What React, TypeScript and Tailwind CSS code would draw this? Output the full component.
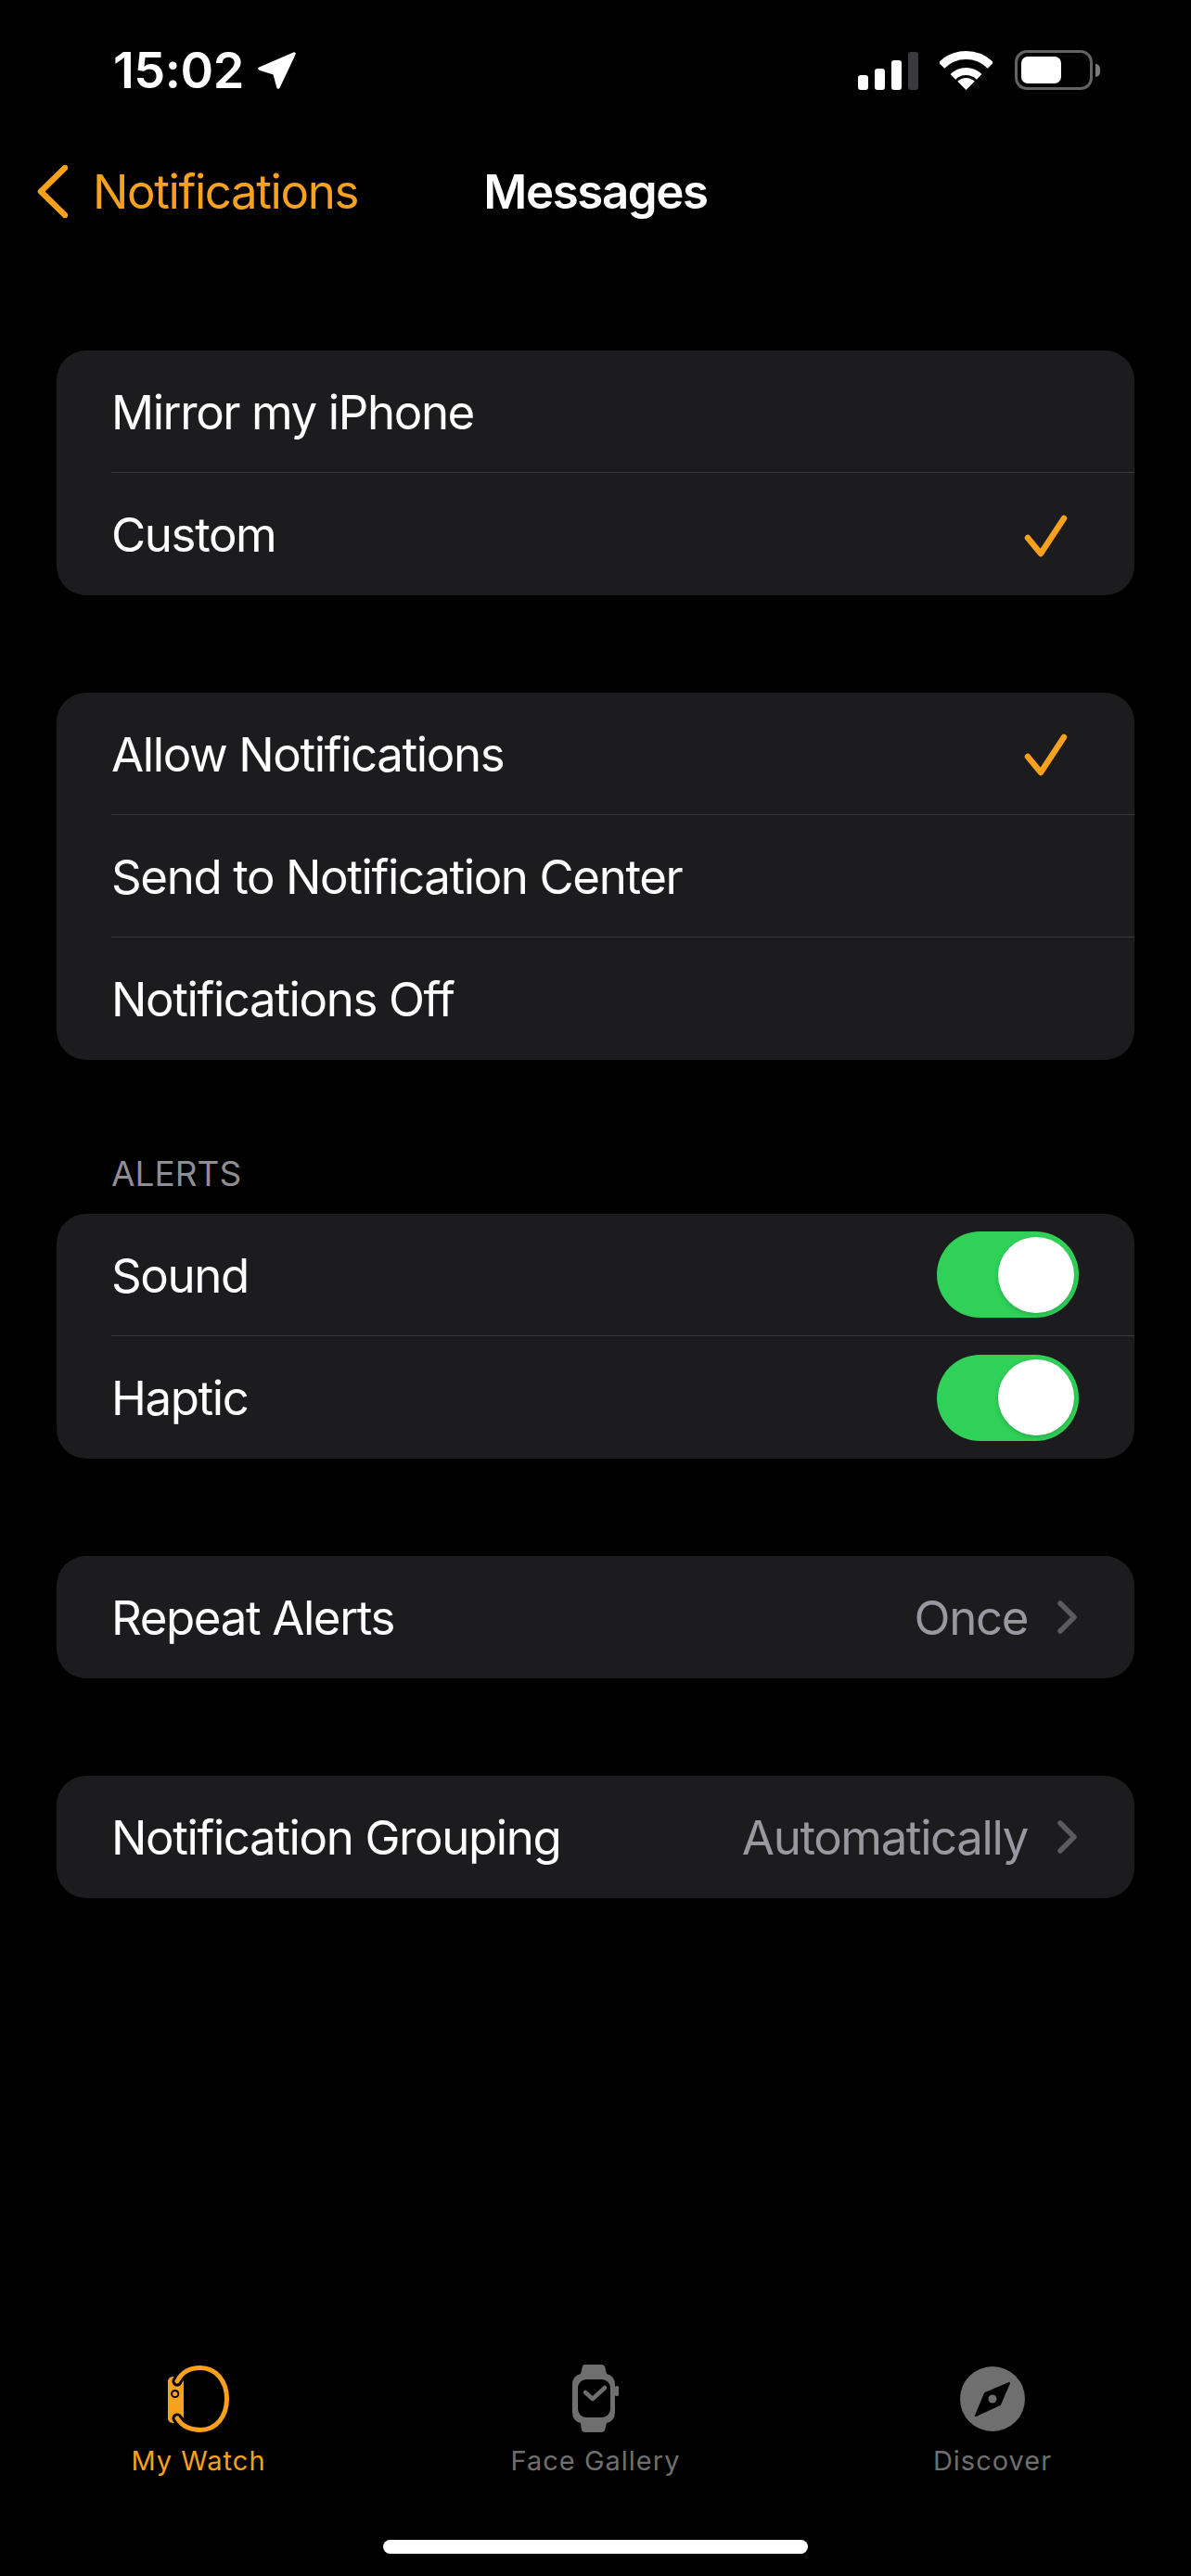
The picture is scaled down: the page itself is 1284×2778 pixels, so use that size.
import React from 'react'

const ORANGE = '#f7a11f'

function Check() {
  return (
    <svg width="48" height="46" viewBox="0 0 48 46" fill="none" stroke={ORANGE} strokeWidth="6.5" strokeLinecap="round" strokeLinejoin="round">
      <path d="M5 25 L19 42 L44 4" />
    </svg>
  )
}

function Chevron() {
  return (
    <svg width="22" height="36" viewBox="0 0 22 36" fill="none" stroke="#5c5c60" strokeWidth="5.5" strokeLinecap="round" strokeLinejoin="round">
      <path d="M3 3 L18 18 L3 33" />
    </svg>
  )
}

function Toggle() {
  return (
    <div className="w-[153px] h-[93px] rounded-full bg-[#30d158] flex items-center justify-end pr-[5px]">
      <div className="w-[82px] h-[82px] rounded-full bg-white shadow-[0_2px_5px_rgba(0,0,0,0.18)]" />
    </div>
  )
}

function Row({ label, last, children }: { label: string; last?: boolean; children?: React.ReactNode }) {
  return (
    <div className="pl-[59px]">
      <div className={`h-[132px] flex items-center justify-between text-white ${last ? '' : 'border-b border-[#38383a]'}`}>
        <span className="pt-[3px]">{label}</span>
        {children}
      </div>
    </div>
  )
}

function Card({ children }: { children: React.ReactNode }) {
  return <div className="bg-[#1c1c1e] rounded-[32px] overflow-hidden">{children}</div>
}

function Value({ text }: { text: string }) {
  return (
    <div className="flex items-center gap-[32px] pr-[61px]">
      <span className="pt-[3px] text-[#98989f]">{text}</span>
      <Chevron />
    </div>
  )
}

function StatusBar() {
  return (
    <div className="h-[152px] pt-[54px] pl-[122px] pr-[98px] flex items-start justify-between text-white">
      <div className="flex items-center gap-[15px] h-[43px]">
        <span className="text-[54px] font-semibold leading-none tracking-[-0.5px]">15:02</span>
        <svg width="41" height="40" viewBox="0 0 41 40" fill="white" stroke="white" strokeWidth="3.5" strokeLinejoin="round">
          <path d="M39 2 L2 18 L18 23 L22 38 Z" />
        </svg>
      </div>
      <div className="flex items-center">
        <div className="flex items-end gap-[7px] h-[42px]">
          <div className="w-[11px] h-[16px] rounded-[3px] bg-white" />
          <div className="w-[11px] h-[23px] rounded-[3px] bg-white" />
          <div className="w-[11px] h-[32px] rounded-[3px] bg-white" />
          <div className="w-[11px] h-[41px] rounded-[3px] bg-[#3a3a3c]" />
        </div>
        <svg className="ml-[23px]" width="57" height="42" viewBox="0 0 57 42" fill="none" stroke="white">
          <path d="M2 15.5 A37.5 37.5 0 0 1 55 15.5" strokeWidth="9" />
          <path d="M14.4 27.9 A20 20 0 0 1 42.6 27.9" strokeWidth="8" />
          <path d="M28.5 42 L19.3 32.8 A13 13 0 0 1 37.7 32.8 Z" fill="white" stroke="none" />
        </svg>
        <div className="ml-[24px] flex items-center gap-[3px]">
          <div className="w-[84px] h-[43px] rounded-[13px] border-[3px] border-[#636366] p-[4px] pr-[31px]">
            <div className="w-full h-full rounded-[7px] bg-white" />
          </div>
          <div className="w-[5px] h-[14px] rounded-r-full bg-[#7c7c80]" />
        </div>
      </div>
    </div>
  )
}

function NavBar() {
  return (
    <div className="h-[108px] px-[40px] flex items-center">
      <div className="flex-1 flex items-center gap-[27px]" style={{ color: ORANGE }}>
        <svg width="33" height="57" viewBox="0 0 33 57" fill="none" stroke={ORANGE} strokeWidth="6.5" strokeLinecap="round" strokeLinejoin="round">
          <path d="M30 3 L4 28.5 L30 54" />
        </svg>
        <span className="pt-[3px]">Notifications</span>
      </div>
      <span className="pt-[3px] text-white font-semibold">Messages</span>
      <div className="flex-1" />
    </div>
  )
}

function WatchIcon() {
  return (
    <svg width="66" height="72" viewBox="0 0 66 72" fill="none">
      <path d="M0 17 Q0 13 5 12 L17 12 L17 62 L5 62 Q0 61 0 57 Z" fill={ORANGE} />
      <path d="M10 17 C15 7 24 2.5 35 2.5 C52 2.5 63.5 17 63.5 36 C63.5 55 52 69.5 35 69.5 C24 69.5 15 65 10 57" stroke="black" strokeWidth="11" strokeLinecap="round" />
      <path d="M0 17 L3 12 L3 62 L0 57 Z" fill={ORANGE} />
      <path d="M10 17 C15 7 24 2.5 35 2.5 C52 2.5 63.5 17 63.5 36 C63.5 55 52 69.5 35 69.5 C24 69.5 15 65 10 57" stroke={ORANGE} strokeWidth="5" strokeLinecap="round" />
      <circle cx="7.7" cy="30.5" r="3.6" stroke="black" strokeWidth="2" />
    </svg>
  )
}

function FaceIcon() {
  return (
    <svg width="50" height="73" viewBox="0 0 50 73" fill="none">
      <path d="M11 2 Q11 0 14 0 L31 0 Q34 0 35 2 L37 10 Q46 12 46 22 L46 51 Q46 61 37 63 L35 71 Q34 73 31 73 L14 73 Q11 73 10 71 L9 63 Q0 61 0 51 L0 22 Q0 12 9 10 Z" fill="#6f6f6f" />
      <rect x="46" y="23" width="4" height="11" rx="1.5" fill="#6f6f6f" />
      <rect x="6" y="16" width="35" height="41" rx="9" fill="black" />
      <path d="M14 30 L22 37 L35 25" stroke="#6f6f6f" strokeWidth="4.5" strokeLinecap="round" strokeLinejoin="round" />
    </svg>
  )
}

function CompassIcon() {
  return (
    <svg width="70" height="70" viewBox="0 0 70 70">
      <circle cx="35" cy="35" r="35" fill="#6f6f6f" />
      <path d="M53 18 L43 41 L17 53 L27 29 Z" fill="black" stroke="black" strokeWidth="2" strokeLinejoin="round" />
      <circle cx="35" cy="35" r="4.5" fill="#6f6f6f" />
    </svg>
  )
}

function Tab({ icon, label, active }: { icon: React.ReactNode; label: string; active?: boolean }) {
  return (
    <div className="flex flex-col items-center">
      <div className="h-[73px] flex items-center">{icon}</div>
      <span className={`mt-[13px] text-[29px] leading-[36px] tracking-[1px] ${active ? 'text-[#f7a11f]' : 'text-[#6f6f6f]'}`}>{label}</span>
    </div>
  )
}

export default function App() {
  return (
    <div className="w-[1284px] h-[2778px] bg-black flex flex-col font-['Inter',sans-serif] text-[51px] tracking-[-1.4px]">
      <StatusBar />
      <NavBar />

      <div className="mt-[118px] px-[61px] flex flex-col gap-[104px]">
        <Card>
          <Row label="Mirror my iPhone" />
          <Row label="Custom" last>
            <div className="pr-[72px] pt-[3px]"><Check /></div>
          </Row>
        </Card>

        <div className="mt-px">
          <Card>
            <Row label="Allow Notifications">
              <div className="pr-[72px] pt-[3px]"><Check /></div>
            </Row>
            <Row label="Send to Notification Center" />
            <Row label="Notifications Off" last />
          </Card>
        </div>

        <div>
          <div className="h-[62px] pl-[59px] text-[37px] text-[#8e8e93] leading-[38px] tracking-normal">ALERTS</div>
          <Card>
            <Row label="Sound">
              <div className="pr-[60px]"><Toggle /></div>
            </Row>
            <Row label="Haptic" last>
              <div className="pr-[60px]"><Toggle /></div>
            </Row>
          </Card>
        </div>

        <div className="mt-px">
          <Card>
            <Row label="Repeat Alerts" last>
              <Value text="Once" />
            </Row>
          </Card>
        </div>

        <div className="mt-px">
          <Card>
            <Row label="Notification Grouping" last>
              <Value text="Automatically" />
            </Row>
          </Card>
        </div>
      </div>

      <div className="mt-auto grid grid-cols-3">
        <Tab icon={<WatchIcon />} label="My Watch" active />
        <Tab icon={<FaceIcon />} label="Face Gallery" />
        <Tab icon={<CompassIcon />} label="Discover" />
      </div>
      <div className="mt-[67px] mb-[24px] flex justify-center">
        <div className="w-[458px] h-[15px] rounded-full bg-white" />
      </div>
    </div>
  )
}
